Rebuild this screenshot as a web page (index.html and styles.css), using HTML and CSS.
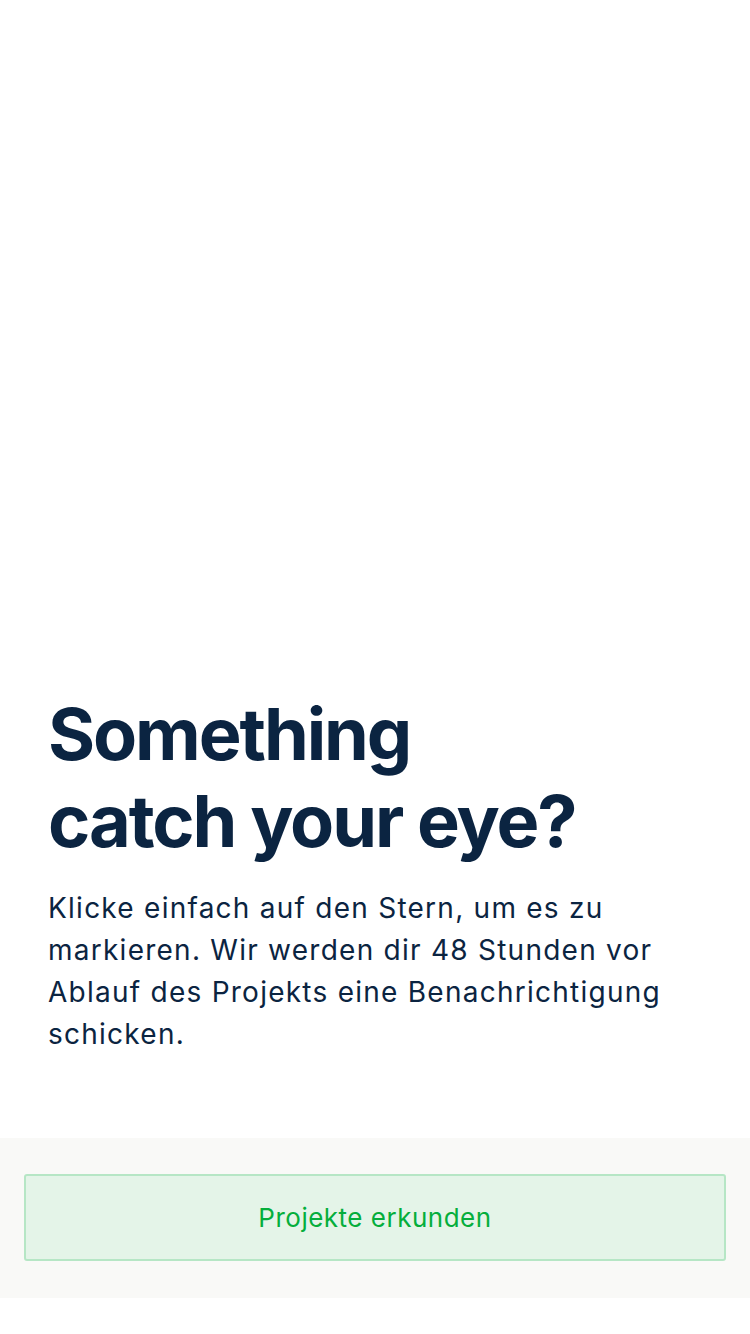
FILE: index.html
```html
<!DOCTYPE html>
<html lang="de">
<head>
<meta charset="utf-8">
<title>Something catch your eye?</title>
<link rel="stylesheet" href="styles.css">
</head>
<body>
<div class="screen">
  <main class="content">
    <h1 class="title">Something<br>catch your eye?</h1>
    <p class="text">Klicke einfach auf den Stern, um es zu markieren. Wir werden dir 48 Stunden vor Ablauf des Projekts eine Benachrichtigung schicken.</p>
  </main>
  <footer class="footer">
    <button class="cta">Projekte erkunden</button>
  </footer>
  <div class="safe"></div>
</div>
</body>
</html>
```

FILE: styles.css
```css
* { box-sizing: border-box; }
html, body { margin: 0; padding: 0; background: #ffffff; }
body { font-family: Inter, "Liberation Sans", sans-serif; color: #0b2441; }
.screen { width: 750px; height: 1334px; display: flex; flex-direction: column; }
.content { flex: 1; display: flex; flex-direction: column; justify-content: flex-end; padding: 0 48px 83px 48px; }
.title { margin: 0; font-size: 72px; line-height: 87px; font-weight: 700; letter-spacing: -2.1px; }
.text { margin: 23px 0 0 0; font-size: 28px; line-height: 42px; font-weight: 400; letter-spacing: 1.25px; }
.footer { background: #f9f9f7; padding: 36px 24px 37px 24px; }
.cta { display: block; width: 100%; height: 87px; border: 2px solid #b6e6c5; border-radius: 3px; background: #e4f4e8; color: #05ae3c; font-family: Inter, "Liberation Sans", sans-serif; font-size: 26px; letter-spacing: 0.5px; }
.safe { height: 36px; }
```
